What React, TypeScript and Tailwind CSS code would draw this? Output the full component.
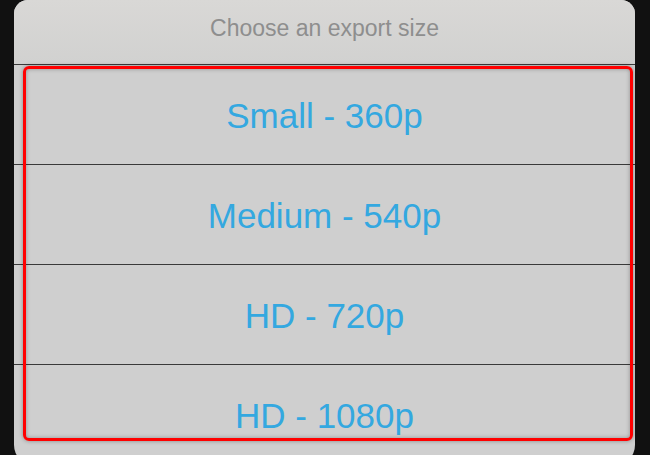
import React from "react";

const sizes = ["Small - 360p", "Medium - 540p", "HD - 720p", "HD - 1080p"];

export default function App() {
  return (
    <div
      className="relative h-[455px] w-[650px] overflow-hidden bg-[#111111] pl-[14px] pr-[15px]"
      style={{ fontFamily: '"Liberation Sans", Arial, sans-serif' }}
    >
      <div className="flex h-[465px] flex-col overflow-hidden rounded-t-[14px] rounded-b-[20px] bg-[#cfcfcf]">
        <div className="flex h-[65px] shrink-0 items-center justify-center border-b border-[#3a3a3a] bg-gradient-to-b from-[#d9d8d6] to-[#d1d1d0] pb-[8px]">
          <span className="text-[23px] text-[#8e8e8e]">Choose an export size</span>
        </div>
        {sizes.map((s, i) => (
          <div
            key={s}
            className={
              i < sizes.length - 1
                ? "flex h-[100px] shrink-0 items-center justify-center border-b border-[#3a3a3a] pt-[3px]"
                : "flex h-[100px] shrink-0 items-center justify-center pt-[3px]"
            }
          >
            <span className="text-[35px] text-[#34a8e0]">{s}</span>
          </div>
        ))}
      </div>
      {/* highlight frame around the size options */}
      <div className="pointer-events-none absolute left-[23px] top-[66px] h-[375px] w-[610px] rounded-[6px] border-[3px] border-[#ff0000] shadow-[0_0_4px_rgba(0,0,0,0.35),inset_0_0_4px_rgba(0,0,0,0.3)]" />
    </div>
  );
}
